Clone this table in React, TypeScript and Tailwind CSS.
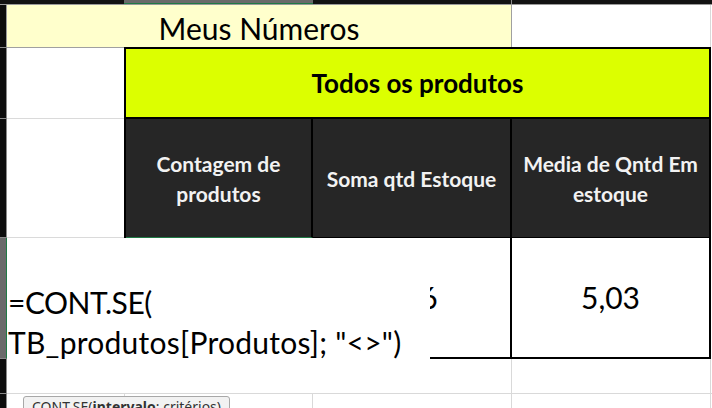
import React from 'react';

export default function App() {
  return (
    <div className="relative w-[712px] h-[408px] overflow-hidden bg-white text-black font-['Lato',sans-serif]">
      {/* column header strip */}
      <div className="flex h-[5px] border-b border-[#9a9a9a] bg-[#121212]">
        <div className="w-[124px] shrink-0" />
        <div className="w-[189px] shrink-0 bg-[#6a6a6a] border-b border-[#1f7a45]" />
        <div className="w-[199px] shrink-0 border-r border-[#8a8a8a]" />
        <div className="flex-1" />
      </div>

      {/* row 1 */}
      <div className="flex h-[42px]">
        <div className="w-[7px] shrink-0 bg-[#0d0d0d] border-r border-[#9a9a9a]" />
        <div className="w-[505px] shrink-0 bg-[#ffffcc] border-r border-[#a0a0a0] flex items-center justify-center pt-[4px] text-[30px] leading-none">
          Meus Números
        </div>
        <div className="w-[199px] shrink-0 border-r border-[#d9d9d9]" />
        <div className="flex-1" />
      </div>

      {/* rows 2-4 */}
      <div className="flex">
        <div className="w-[7px] shrink-0 flex flex-col">
          <div className="h-[72px] bg-[#0d0d0d] border-r border-t border-b border-[#8a8a8a]" />
          <div className="h-[119px] bg-[#0d0d0d] border-r border-b border-[#8a8a8a]" />
          <div className="h-[121px] bg-[#6a6a6a] border-r border-[#1f7a45] border-b border-b-[#8a8a8a]" />
        </div>
        <div className="w-[117px] shrink-0 flex flex-col">
          <div className="h-[72px] border-t border-[#a0a0a0] border-b border-b-[#dadada]" />
          <div className="h-[119px] border-b border-[#dadada]" />
          <div className="h-[121px] border-b border-[#dadada]" />
        </div>
        <div className="w-[587px] shrink-0 flex flex-col">
          <div className="h-[72px] bg-[#dcff00] border-2 border-black flex items-center justify-center text-[26px] font-bold pt-[1px]">
            Todos os produtos
          </div>
          <div className="h-[119px] flex border-x-2 border-black bg-[#262626] text-[#f2f2f2] font-bold text-[21px] leading-[30px]">
            <div className="w-[187px] shrink-0 border-r-2 border-black border-b border-b-[#1f7a45] flex items-center justify-center text-center pt-[2px]">
              Contagem de<br />produtos
            </div>
            <div className="w-[199px] shrink-0 border-r-2 border-black border-b border-b-black flex items-center justify-center text-center pt-[2px]">
              Soma qtd Estoque
            </div>
            <div className="flex-1 border-b border-black flex items-center justify-center text-center pt-[2px]">
              Media de Qntd Em<br />estoque
            </div>
          </div>
          <div className="h-[121px] flex border-x-2 border-b-2 border-black text-[30px]">
            <div className="w-[187px] shrink-0 border-r-2 border-black flex items-center justify-center">27</div>
            <div className="w-[199px] shrink-0 border-r-2 border-black flex items-center justify-center">166</div>
            <div className="flex-1 flex items-center justify-center">5,03</div>
          </div>
        </div>
        <div className="flex-1" />
      </div>

      {/* rows 5-6 */}
      {[35, 20].map((h, i) => (
        <div key={i} className="flex" style={{ height: h }}>
          <div className="w-[7px] shrink-0 bg-[#0d0d0d] border-r border-b border-[#8a8a8a]" />
          <div className="w-[118px] shrink-0 border-r border-b border-[#d9d9d9]" />
          <div className="w-[188px] shrink-0 border-r border-b border-[#d9d9d9]" />
          <div className="w-[199px] shrink-0 border-r border-b border-[#d9d9d9]" />
          <div className="w-[199px] shrink-0 border-r border-b border-[#d9d9d9]" />
          <div className="flex-1 border-b border-[#d9d9d9]" />
        </div>
      ))}

      {/* in-cell formula editor overlay */}
      <div className="absolute left-[7px] top-[238px] w-[423px] h-[155px] bg-white pt-[44px] pl-[1px] text-[30px] leading-[40px] whitespace-nowrap">
        <div className="tracking-[-0.5px]">=CONT.SE(</div>
        <div className="tracking-[0.25px]">TB_produtos[Produtos]; "&lt;&gt;")</div>
      </div>

      {/* function tooltip */}
      <div className="absolute left-[23px] top-[396px] h-[24px] px-[8px] border border-[#a8a8a8] rounded-[3px] bg-[#f2f2f2] text-[#333] text-[14px] leading-[20px] font-['Noto_Sans',sans-serif] whitespace-nowrap">
        CONT.SE(<span className="font-bold">intervalo</span>; critérios)
      </div>
    </div>
  );
}
